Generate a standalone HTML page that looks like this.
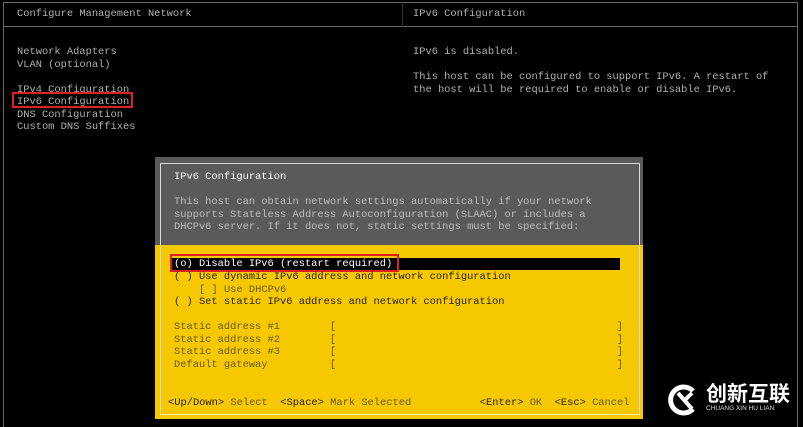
<!DOCTYPE html>
<html><head><meta charset="utf-8"><style>
body{margin:0;width:803px;height:427px;background:#000;position:relative;overflow:hidden;font-family:"Liberation Mono",monospace;font-size:10.4px;}
.t{position:absolute;white-space:pre;line-height:12.5px;}
.g{color:#b0b0b0}
.l{position:absolute;background:#6a6a6a}
</style></head><body>
<div class="l" style="left:3px;top:2px;width:1px;height:425px"></div>
<div class="l" style="left:3px;top:2px;width:795px;height:1px"></div>
<div class="l" style="left:797px;top:2px;width:1px;height:425px"></div>
<div class="l" style="left:3px;top:26px;width:795px;height:1px"></div>
<div class="l" style="left:402px;top:2px;width:1px;height:25px;background:#333"></div>

<div class="t g" style="left:17px;top:8px">Configure Management Network</div>
<div class="t g" style="left:413px;top:8px">IPv6 Configuration</div>
<div class="t g" style="left:17px;top:46px">Network Adapters
VLAN (optional)

IPv4 Configuration
IPv6 Configuration
DNS Configuration
Custom DNS Suffixes</div>
<div style="position:absolute;left:12px;top:92px;width:121px;height:16px;border:2px solid #e02020;box-sizing:border-box"></div>
<div class="t g" style="left:413px;top:46px">IPv6 is disabled.

This host can be configured to support IPv6. A restart of
the host will be required to enable or disable IPv6.</div>

<!-- dialog -->
<div style="position:absolute;left:155px;top:157px;width:488px;height:262px;background:#f6c800"></div>
<div style="position:absolute;left:155px;top:157px;width:488px;height:88px;background:#5a5a5a"></div>
<div style="position:absolute;left:160px;top:163px;width:480px;height:252px;border:1px solid #d8d8d8;border-bottom-color:#fff3a0;box-sizing:border-box"></div>
<div class="t" style="left:174px;top:171px;color:#fff">IPv6 Configuration</div>
<div class="t" style="left:174px;top:196px;color:#bdbdbd">This host can obtain network settings automatically if your network
supports Stateless Address Autoconfiguration (SLAAC) or includes a
DHCPv6 server. If it does not, static settings must be specified:</div>
<div style="position:absolute;left:172px;top:258px;width:448px;height:12px;background:#000"></div>
<div class="t" style="left:174px;top:258px;color:#fff">(o) Disable IPv6 (restart required)</div>
<div style="position:absolute;left:170px;top:254px;width:229px;height:18px;border:2px solid #e02020;box-sizing:border-box"></div>
<div class="t" style="left:174px;top:271px;color:#2a2200">( ) Use dynamic IPv6 address and network configuration</div>
<div class="t" style="left:199px;top:284px;color:#6a5a10">[ ] Use DHCPv6</div>
<div class="t" style="left:174px;top:296px;color:#2a2200">( ) Set static IPv6 address and network configuration</div>
<div class="t" style="left:174px;top:321px;color:#6a5a10">Static address #1        [                                             ]
Static address #2        [                                             ]
Static address #3        [                                             ]
Default gateway          [                                             ]</div>
<div class="t" style="left:168px;top:397px;color:#6a5a10"><span style="color:#2a2200">&lt;Up/Down&gt;</span> Select  <span style="color:#2a2200">&lt;Space&gt;</span> Mark Selected           <span style="color:#2a2200">&lt;Enter&gt;</span> OK  <span style="color:#2a2200">&lt;Esc&gt;</span> Cancel</div>

<!-- logo -->
<svg style="position:absolute;left:666px;top:383px" width="34" height="34" viewBox="0 0 34 34">
<path d="M27 8 A13 13 0 1 0 27 26" fill="none" stroke="#fff" stroke-width="5"/>
<path d="M12 10 L26 26 M26 10 L18 18" stroke="#fff" stroke-width="4" fill="none"/>
</svg>
<div class="t" style="left:706px;top:381px;color:#fff;font-family:'Noto Sans CJK SC',sans-serif;font-size:21px;line-height:24px;font-weight:bold">创新互联</div>
<div class="t" style="left:706px;top:405px;color:#ddd;font-family:'Liberation Sans',sans-serif;font-size:6.5px;line-height:8px">CHUANG XIN HU LIAN</div>
</body></html>
